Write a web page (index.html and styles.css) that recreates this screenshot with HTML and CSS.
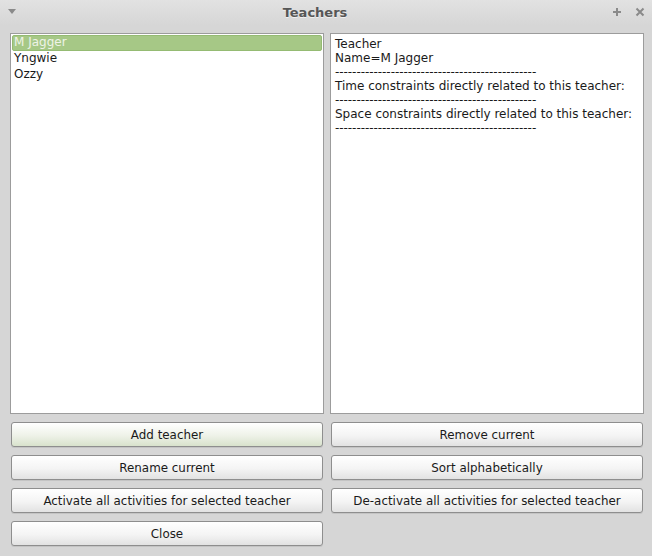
FILE: index.html
```html
<!DOCTYPE html>
<html lang="en">
<head>
  <meta charset="UTF-8" />
  <title>Teachers</title>
  <link rel="stylesheet" href="styles.css">
</head>
<body>
  <div class="window">
    <!-- Title bar -->
    <div class="titlebar">
      <span class="menu-arrow"></span>
      <span class="title">Teachers</span>
      <span class="win-btns">
        <svg width="10" height="10" viewBox="0 0 10 10"><path d="M5 1v8M1 5h8" stroke="#8a8a8a" stroke-width="2"/></svg>
        <svg width="10" height="10" viewBox="0 0 10 10"><path d="M1.5 1.5l7 7M8.5 1.5l-7 7" stroke="#8a8a8a" stroke-width="2"/></svg>
      </span>
    </div>

    <div class="content">
      <div class="panels">
        <div class="list-box">
          <div class="list-item selected">M Jagger</div>
          <div class="list-item">Yngwie</div>
          <div class="list-item">Ozzy</div>
        </div>
        <div class="text-box">
          <div>Teacher</div>
          <div>Name=M Jagger</div>
          <div class="dashes">-----------------------------------------------</div>
          <div>Time constraints directly related to this teacher:</div>
          <div class="dashes">-----------------------------------------------</div>
          <div>Space constraints directly related to this teacher:</div>
          <div class="dashes">-----------------------------------------------</div>
        </div>
      </div>

      <div class="buttons">
        <button class="btn default">Add teacher</button>
        <button class="btn">Remove current</button>
        <button class="btn">Rename current</button>
        <button class="btn">Sort alphabetically</button>
        <button class="btn">Activate all activities for selected teacher</button>
        <button class="btn">De-activate all activities for selected teacher</button>
        <button class="btn">Close</button>
      </div>
    </div>
  </div>
</body>
</html>
```

FILE: styles.css
```css
html, body {
  margin: 0;
  padding: 0;
}
body {
  width: 652px;
  height: 556px;
  overflow: hidden;
  background-color: #d6d6d6;
  font-family: "DejaVu Sans", sans-serif;
  font-size: 12px;
  color: #1a1a1a;
}
.window {
  height: 556px;
  display: flex;
  flex-direction: column;
}
.titlebar {
  height: 25px;
  flex: none;
  display: flex;
  align-items: center;
  justify-content: center;
  position: relative;
  padding-right: 22px;
  background: linear-gradient(#e2e2e2, #d6d6d6);
}
.title {
  font-weight: bold;
  font-size: 13px;
  color: #565656;
  text-shadow: 0 1px 0 #f0f0f0;
}
.menu-arrow {
  position: absolute;
  left: 8px;
  top: 9px;
  width: 0;
  height: 0;
  border-left: 4px solid transparent;
  border-right: 4px solid transparent;
  border-top: 5px solid #8a8a8a;
}
.win-btns {
  position: absolute;
  right: 7px;
  top: 7px;
  display: flex;
  gap: 13px;
}
.win-btns svg {
  display: block;
}
.content {
  padding: 8px 8px 0 10px;
}
.panels {
  display: grid;
  grid-template-columns: 314px 314px;
  gap: 6px;
  height: 381px;
}
.list-box, .text-box {
  background-color: #fff;
  border: 1px solid #9c9c9c;
  box-sizing: border-box;
}
.list-box {
  padding: 1px;
}
.list-item {
  height: 16px;
  line-height: 15px;
  padding-left: 2px;
}
.list-item.selected {
  background-color: #a6c886;
  color: #eef3e6;
  border: 1px solid #95bb73;
  border-radius: 2px;
  height: 14px;
  line-height: 13px;
  padding-left: 1px;
}
.text-box {
  padding: 3px 4px;
  line-height: 14px;
}
.dashes {
  letter-spacing: -0.05px;
}
.buttons {
  display: grid;
  grid-template-columns: 312px 312px;
  column-gap: 8px;
  row-gap: 8px;
  margin: 8px 0 0 1px;
}
.btn {
  height: 25px;
  margin: 0;
  padding: 0;
  font-family: "DejaVu Sans", sans-serif;
  font-size: 11.9px;
  color: #1a1a1a;
  border: 1px solid #8e8e8e;
  border-radius: 3px;
  background: linear-gradient(#ffffff, #f4f4f4 55%, #e2e2e2);
  box-shadow: 0 1px 0 #c4c4c4;
}
.btn.default {
  background: linear-gradient(#ffffff, #eef2e8 55%, #d8e2cc);
}
```
